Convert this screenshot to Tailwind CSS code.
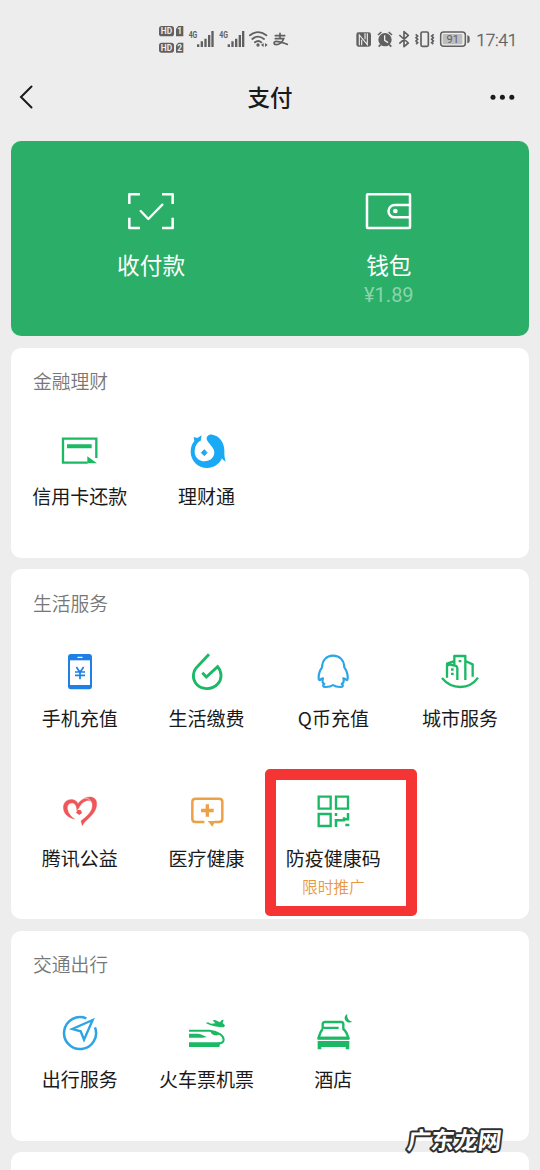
<!DOCTYPE html>
<html lang="zh-CN">
<head>
<meta charset="utf-8">
<title>支付</title>
<script src="https://cdn.jsdelivr.net/npm/@tailwindcss/browser@4"></script>
</head>
<body class="bg-[#ededed]">
<div class="relative flex h-[1170px] w-[540px] flex-col overflow-hidden bg-[#ededed] font-['Noto_Sans_CJK_SC',sans-serif] text-[#1a1a1a]">

  <!-- status bar -->
  <div class="flex h-[65px] shrink-0 gap-[45px] pt-[15px] pl-[150px]">
    <svg class="h-[50px] w-[150px]" viewBox="0 0 450 150" fill="#606060">
      <g font-family="Roboto" font-weight="700" font-size="25" fill="#ededed" text-anchor="middle">
        <rect x="27" y="33" width="45" height="31" rx="8" fill="#606060"/><text x="49.500" y="57.500" textLength="34" lengthAdjust="spacingAndGlyphs">HD</text>
        <path d="M85 33h15v31H78V41z" fill="#606060"/><text x="89" y="57.500">1</text>
        <rect x="27" y="83" width="45" height="30" rx="8" fill="#606060"/><text x="49.500" y="107" textLength="34" lengthAdjust="spacingAndGlyphs">HD</text>
        <path d="M85 83h15v30H78V91z" fill="#606060"/><text x="89" y="107">2</text>
      </g>
      <g font-family="Roboto" font-weight="700" font-size="27">
        <text x="116" y="69" textLength="26" lengthAdjust="spacingAndGlyphs">4G</text>
        <text x="208" y="69" textLength="26" lengthAdjust="spacingAndGlyphs">4G</text>
      </g>
      <path d="M141 88h7v8h-7zM152 79h7v17h-7zM163 71h7v25h-7zM174 60h7v36h-7zM184 48h7v48h-7zM233 88h7v8h-7zM244 79h7v17h-7zM255 71h7v25h-7zM266 60h7v36h-7zM276 48h7v48h-7z"/>
      <g fill="none" stroke="#606060" stroke-width="5.500" stroke-linecap="round">
        <path d="M300 61q24-19 49 0M307 72q17-14 35 0M315 82q10-8 19 0"/>
      </g>
      <circle cx="324" cy="90" r="5"/>
      <path d="M341 84v12l-8-6zM345 84v12l8-6z"/>
      <g fill="none" stroke="#606060" stroke-width="5" stroke-linecap="round">
        <path d="M376 62h28M390 55v15M376 71h25c-3 9-13 18-22 18c-9 0-9-10 0-10c12 0 20 5 33 9"/>
      </g>
    </svg>
    <svg class="h-[50px] w-[190px]" viewBox="0 0 570 150" fill="#606060">
      <path d="M40 52h31q7 0 7 7v28q0 8-9 8H40q-6 0-6-7V59q0-7 6-7z"/>
      <path d="M43 91V60l24 29V55M50 91V74M60 73V55" fill="none" stroke="#ededed" stroke-width="3.500"/>
      <circle cx="120" cy="74" r="20"/>
      <path d="M99 60l10-9M141 60l-10-9M107 89l-6 6M133 89l6 6" stroke="#606060" stroke-width="5"/>
      <path d="M119 61v15l10 7" fill="none" stroke="#ededed" stroke-width="4"/>
      <path d="M163 60l27 24-13 11V50l13 11-27 25" fill="none" stroke="#606060" stroke-width="5" stroke-linejoin="round"/>
      <rect x="228" y="51" width="22" height="43" rx="4" fill="none" stroke="#606060" stroke-width="5"/>
      <path d="M212 58l6 5-5 5 5 5-5 5 5 5-5 4M266 58l-6 5 5 5-5 5 5 5-5 5 5 4" fill="none" stroke="#606060" stroke-width="5"/>
      <rect x="287" y="51" width="74" height="43" rx="9" fill="none" stroke="#606060" stroke-width="4.500"/>
      <rect x="293" y="57" width="59" height="31" rx="3" fill="#bdbdbd"/>
      <path d="M367 61q7 1 7 7v10q0 6-7 7z"/>
      <text x="323" y="84" font-family="Roboto" font-size="33" text-anchor="middle">91</text>
      <text x="394" y="93" font-family="Roboto" font-size="52" font-weight="300" textLength="123" stroke="#606060" stroke-width="1">17:41</text>
    </svg>
  </div>

  <!-- title bar -->
  <header class="flex h-[75.500px] shrink-0 items-start justify-between pt-[16px]">
    <svg class="mt-px h-[30px] w-[60px]" viewBox="0 0 60 30" fill="none" stroke="#1a1a1a" stroke-width="2" stroke-linecap="round"><path d="M31.500 4.500L21 15l10.500 10.500"/></svg>
    <h1 class="-mt-px text-[22.500px] leading-[32px] font-medium">支付</h1>
    <svg class="mt-px h-[30px] w-[60px]" viewBox="0 0 60 30" fill="#1a1a1a"><circle cx="13" cy="15.300" r="2.500"/><circle cx="22.400" cy="15.300" r="2.500"/><circle cx="31.800" cy="15.300" r="2.500"/></svg>
  </header>

  <main class="flex flex-col gap-[11.500px] px-[11px]">
    <section class="grid h-[195.500px] shrink-0 grid-cols-2 rounded-[10px] bg-[#2bae67] px-[21.250px] pt-[45px] text-white">
      <div class="flex flex-col items-center">
        <svg class="h-[50px] w-[50px]" viewBox="78 48 150 150" fill="none" stroke="#fff" stroke-width="7.500" stroke-linejoin="round">
          <path d="M88 102V73h32M186 73h32v29M88 143v31h32M186 174h32v-31"/><path d="M122 123l23 24 42-43" stroke-width="7" stroke-linecap="round"/>
        </svg>
        <div class="mt-[13px] text-[22.700px] leading-[32px]">收付款</div>
      </div>
      <div class="flex flex-col items-center">
        <svg class="h-[50px] w-[50px]" viewBox="792 48 150 150" fill="none" stroke="#fff" stroke-width="7.500" stroke-linejoin="round">
          <rect x="801" y="73" width="129" height="101" rx="2"/><path d="M930 105h-46a18.500 18.500 0 0 0 0 37h46"/><circle cx="886" cy="123" r="7" fill="#fff" stroke="none"/>
        </svg>
        <div class="mt-[13px] text-[22.700px] leading-[32px]">钱包</div>
        <div class="font-[Roboto,sans-serif] text-[20px] leading-[28px] text-[#8ad4ac]">¥1.89</div>
      </div>
    </section>

    <section class="h-[210px] shrink-0 rounded-[10px] bg-white px-[5.500px]">
      <h2 class="h-[66px] pt-[19px] pl-[16.500px] text-[18.800px] leading-[28px] font-[350] text-[#777]">金融理财</h2>
      <div class="grid grid-cols-4">
        <div class="flex h-[140px] flex-col items-center pt-[16px]">
          <svg class="h-[42px] w-[42px]" viewBox="147 270 126 126" fill="#1cb965">
            <path d="M233 368H159V296H259V354" fill="none" stroke="#1cb965" stroke-width="7"/><path d="M171 313h74v12h-74zM232 349l29 21h-29z"/>
          </svg>
          <div class="mt-[10px] text-[19px] leading-[28px] whitespace-nowrap">信用卡还款</div>
        </div>
        <div class="flex h-[140px] flex-col items-center pt-[16px]">
          <svg class="h-[42px] w-[42px]" viewBox="527 270 126 126" fill="#1aa9f5">
            <path d="M574 286L571 302C559 308 553 320 553 335C553 352 566 363 582 364C600 364 612 352 612 337C612 322 594 312 589 298C588 288 596 283 606 284C628 287 642 308 642 332C642 343 642 353 646 365C640 362 637 359 635 355C626 374 609 384 591 384C562 384 541 362 541 335C541 322 545 311 552 303L550 291L561 294Z"/>
            <path d="M582 329l8 9-8 9-9-9z" stroke="#1aa9f5" stroke-width="3" stroke-linejoin="round"/>
          </svg>
          <div class="mt-[10px] text-[19px] leading-[28px] whitespace-nowrap">理财通</div>
        </div>
      </div>
    </section>

    <section class="h-[350px] shrink-0 rounded-[10px] bg-white px-[5.500px]">
      <h2 class="h-[66px] pt-[20px] pl-[16.500px] text-[18.800px] leading-[28px] font-[350] text-[#777]">生活服务</h2>
      <div class="grid grid-cols-4">
        <div class="flex h-[140px] flex-col items-center pt-[16px]">
          <svg class="h-[42px] w-[42px]" viewBox="147 213 126 126">
            <rect x="174" y="222" width="72" height="106" rx="9" fill="#1f7fe5"/><path d="M180 241h60v74h-60z" fill="#fff"/>
            <path d="M204 232h12" stroke="#fff" stroke-width="4" stroke-linecap="round"/>
            <path d="M199 261l11 16 11-16M210 277v21M195 276h30M195 286h30" fill="none" stroke="#1f7fe5" stroke-width="5"/>
          </svg>
          <div class="mt-[11px] text-[19px] leading-[28px] whitespace-nowrap">手机充值</div>
        </div>
        <div class="flex h-[140px] flex-col items-center pt-[16px]">
          <svg class="h-[42px] w-[42px]" viewBox="527 213 126 126" fill="none" stroke="#1cb965" stroke-width="8.500">
            <path d="M596 223L561 260C546 274 546 297 557 311C572 330 605 331 622 312C636 297 635 276 622 260L588 291L576 278"/>
          </svg>
          <div class="mt-[11px] text-[19px] leading-[28px] whitespace-nowrap">生活缴费</div>
        </div>
        <div class="flex h-[140px] flex-col items-center pt-[16px]">
          <svg class="h-[42px] w-[42px]" viewBox="97 63 126 126" fill="none" stroke="#2ba5e4" stroke-width="6.500" stroke-linejoin="round" stroke-linecap="round">
            <path d="M160 77C140 77 128 91 127 112C120 122 116 132 117 147Q119 154 124 147L130 145C127 153 129 159 134 162C128 165 129 171 138 171C148 171 155 169 160 165C165 169 172 171 182 171C191 171 192 165 186 162C191 159 194 153 191 145L197 147Q203 154 204 146C205 132 201 122 194 112C193 91 181 77 160 77Z"/>
          </svg>
          <div class="mt-[11px] text-[19px] leading-[28px] whitespace-nowrap">Q币充值</div>
        </div>
        <div class="flex h-[140px] flex-col items-center pt-[16px]">
          <svg class="h-[42px] w-[42px]" viewBox="477 63 126 126" fill="none" stroke="#1cb965" stroke-width="7" stroke-linejoin="round">
            <path d="M486 144Q508 171 541 171Q574 171 594 143"/>
            <path d="M501 143V108Q509 100 518 106Q532 105 532 115V150M501 106V101L523 93M523 104V78H556V150M556 93L578 103V140"/>
            <path d="M513 115h8v7h-8zM513 128h8v7h-8zM536 90h8v7h-8z" fill="#1cb965" stroke="none"/>
          </svg>
          <div class="mt-[11px] text-[19px] leading-[28px] whitespace-nowrap">城市服务</div>
        </div>
        <div class="flex h-[140px] flex-col items-center pt-[16px]">
          <svg class="h-[42px] w-[42px]" viewBox="147 64 126 126" fill="#ee5657">
            <path d="M194 148C174 145 160 132 160 113C161 94 177 86 192 91C198 93 202 97 204 102C214 89 229 80 244 82C258 85 263 97 259 112C254 132 238 144 224 157L217 168L213 154C226 143 241 132 246 116C250 99 243 91 230 93C220 95 211 104 206 116L200 122C201 111 196 101 187 100C176 99 170 109 173 121C176 133 183 141 194 148Z" stroke="#ee5657" stroke-width="1"/>
            <path d="M213 122l3 8-8 6-10-7 5-9z"/><path d="M223 87q17-4 21 14" fill="none" stroke="#fff" stroke-width="1.500"/>
          </svg>
          <div class="mt-[11px] text-[19px] leading-[28px] whitespace-nowrap">腾讯公益</div>
        </div>
        <div class="flex h-[140px] flex-col items-center pt-[16px]">
          <svg class="h-[42px] w-[42px]" viewBox="527 64 126 126" fill="#eda046">
            <path d="M582 157H556Q546 157 546 148V96Q546 87 556 87H626Q636 87 636 96V148Q636 157 626 157H612" fill="none" stroke="#eda046" stroke-width="7.500"/>
            <path d="M591 104v37M572 122.500h38" stroke="#eda046" stroke-width="10"/><path d="M592 154h23l-9 17z"/>
          </svg>
          <div class="mt-[11px] text-[19px] leading-[28px] whitespace-nowrap">医疗健康</div>
        </div>
        <div class="relative flex h-[140px] flex-col items-center pt-[16px]">
          <svg class="h-[42px] w-[42px]" viewBox="172 94 126 126" fill="none" stroke="#1cb965" stroke-width="7">
            <path d="M192 111h36v36h-36zM244 111h36v36h-36zM192 163h36v36h-36z"/>
            <path d="M244 160v9M240 182h30M268 185v-12M280 160v19h-12M244 180v22M272 196h12" stroke-width="7.500"/>
          </svg>
          <div class="mt-[11px] text-[19px] leading-[28px] whitespace-nowrap">防疫健康码</div>
          <div class="mt-[5px] text-[15.700px] leading-[20px] font-[350] whitespace-nowrap text-[#e8983e]">限时推广</div>
          <!-- highlight frame around the health code tile -->
          <div class="absolute top-[-6px] left-[-5px] h-[147px] w-[152px] rounded-[5px] border-[11px] border-b-[10px] border-[#f53434]"></div>
        </div>
      </div>
    </section>

    <section class="h-[210px] shrink-0 rounded-[10px] bg-white px-[5.500px]">
      <h2 class="h-[66px] pt-[19px] pl-[16.500px] text-[18.800px] leading-[28px] font-[350] text-[#777]">交通出行</h2>
      <div class="grid grid-cols-4">
        <div class="flex h-[140px] flex-col items-center pt-[16px]">
          <svg class="h-[42px] w-[42px]" viewBox="147 219 126 126" fill="none" stroke="#2ba5e4" stroke-width="7.500">
            <path d="M229 235A48 48 0 1 0 255 262"/><path d="M248 240L187 267L212 274L222 299Z" stroke-width="7"/>
          </svg>
          <div class="mt-[10px] text-[19px] leading-[28px] whitespace-nowrap">出行服务</div>
        </div>
        <div class="flex h-[140px] flex-col items-center pt-[16px]">
          <svg class="h-[42px] w-[42px]" viewBox="527 219 126 126" fill="#1cb965">
            <path d="M586 249l7-2 9 4 13-1-8-9 7-1 15 7 5-7 6-1-3 10 7 7-3 6c-19 0-38-4-55-13z"/>
            <path d="M536 272H598C624 274 640 288 640 299C640 308 632 310 622 311" fill="none" stroke="#1cb965" stroke-width="6"/>
            <path d="M598 271c3 8 8 14 15 15c7 1 11 0 15-3l-14-9zM536 307h94l-3 14h-91zM536 281h27c12 2 17 6 26 10l-11 2h-42z"/>
          </svg>
          <div class="mt-[10px] text-[19px] leading-[28px] whitespace-nowrap">火车票机票</div>
        </div>
        <div class="flex h-[140px] flex-col items-center pt-[16px]">
          <svg class="h-[42px] w-[42px]" viewBox="127 39 126 126" fill="#1cb965">
            <path d="M159 87V73Q159 66 166 66H214Q221 66 221 73V87Q231 95 236 114H147Q151 96 159 87" fill="none" stroke="#1cb965" stroke-width="7"/>
            <path d="M160 80h47v7h-47zM144 110h95v9h-95zM144 123h95v25h-11v-7h-73v7h-11z"/>
            <path d="M233 41c-9 6-11 16-4 22c6 6 14 5 19 2c-12-2-17-12-15-24z"/>
          </svg>
          <div class="mt-[10px] text-[19px] leading-[28px] whitespace-nowrap">酒店</div>
        </div>
      </div>
    </section>

    <section class="h-[60px] shrink-0 rounded-[10px] bg-white"></section>
  </main>

  <!-- watermark -->
  <svg class="absolute top-[1120px] left-[394px] h-[42px] w-[120px]" viewBox="0 0 120 42">
    <text x="16" y="29" transform="skewX(-7)" font-family="Noto Sans CJK SC" font-size="23.500" font-weight="700" textLength="94" fill="#fff" stroke="#303030" stroke-width="4" stroke-linejoin="round" paint-order="stroke">广东龙网</text>
  </svg>
</div>
</body>
</html>
